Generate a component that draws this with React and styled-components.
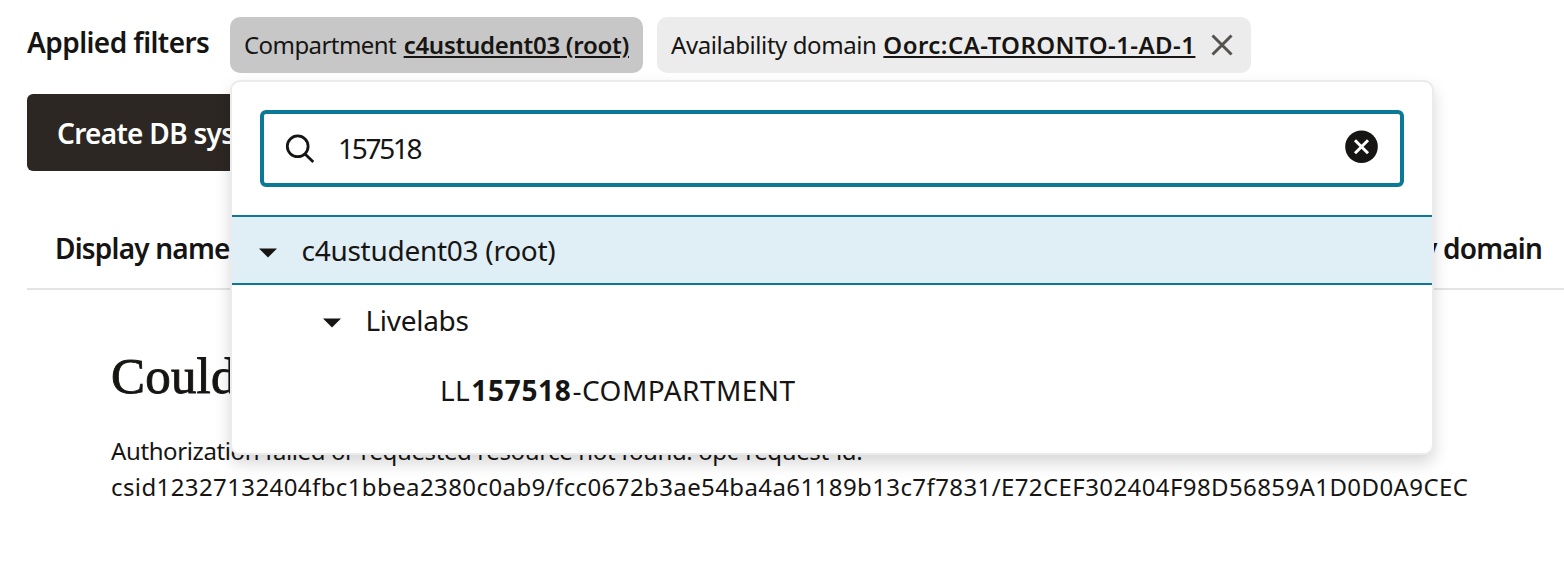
import React from "react";
import styled, { createGlobalStyle } from "styled-components";

const GlobalStyle = createGlobalStyle`
  *, *::before, *::after { box-sizing: border-box; }
  body {
    margin: 0;
    background: #fff;
    color: #161513;
    font-family: "Noto Sans", "Open Sans", sans-serif;
    overflow: hidden;
  }
`;

const Page = styled.main`
  position: relative;
  height: 584px;
  padding: 17px 0 0 27px;
  overflow: hidden;
`;

const Text = styled.span`
  letter-spacing: ${(p) => p.$spacing || 0}px;
  white-space: pre;
`;

const Match = styled.b`
  margin: 0 1px;
  font-weight: 700;
  letter-spacing: 0.7px;
`;

const FilterBar = styled.div`
  display: flex;
  height: 56px;
`;

const FilterLabel = styled.div`
  width: 203px;
  font-size: 28px;
  line-height: 50px;
  font-weight: 600;
`;

const Chip = styled.div`
  display: flex;
  align-items: center;
  width: ${(p) => p.$width}px;
  margin-right: 14px;
  padding-left: 14px;
  border-radius: 10px;
  background: ${(p) => (p.$active ? "#c7c7c7" : "#ececec")};
  font-size: 24px;
  line-height: 56px;
`;

const ChipValue = styled.a`
  margin-left: ${(p) => p.$gap}px;
  font-weight: 600;
  letter-spacing: ${(p) => p.$spacing}px;
  text-decoration: underline;
  text-decoration-thickness: 2px;
  text-underline-offset: 2px;
  white-space: pre;
`;

const ChipClose = styled.svg`
  width: 22px;
  height: 22px;
  margin-left: 16px;
  fill: none;
  stroke: #56534f;
  stroke-width: 3;
`;

const CreateButton = styled.button`
  display: block;
  width: 300px;
  height: 77px;
  margin-top: 21px;
  padding: 0 0 0 30px;
  border: 0;
  border-radius: 6px;
  background: #2c2723;
  color: #fff;
  font: 600 28px/79px "Noto Sans", sans-serif;
  text-align: left;
`;

const TableHead = styled.div`
  display: flex;
  justify-content: space-between;
  height: 84px;
  margin-top: 35px;
  padding: 0 22px 0 28px;
  border-bottom: 2px solid #e4e4e4;
  font-size: 28px;
  font-weight: 600;
  line-height: 84px;
`;

const ErrorBlock = styled.section`
  padding: 56px 0 0 84px;
`;

const ErrorTitle = styled.h2`
  margin: 0;
  font: 400 51px/60px "Liberation Serif", serif;
  letter-spacing: 0.2px;
  -webkit-text-stroke: 0.9px #161513;
`;

const ErrorText = styled.p`
  margin: 27px 0 0;
  font-size: 24px;
  line-height: 36px;
`;

const Popover = styled.div`
  position: absolute;
  left: 230px;
  top: 80px;
  width: 1204px;
  height: 375px;
  border: 2px solid #ebebeb;
  border-radius: 10px;
  background: #fff;
  box-shadow: 0 8px 16px rgba(0, 0, 0, 0.16);
`;

const SearchBox = styled.label`
  display: flex;
  align-items: center;
  height: 77px;
  margin: 28px;
  padding: 0 21px 0 20px;
  border: 4px solid #0b7896;
  border-radius: 6px;
  font-size: 28px;
`;

const SearchIcon = styled.svg`
  width: 32px;
  height: 32px;
  fill: none;
  stroke: #161513;
  stroke-width: 2.8;
`;

const SearchValue = styled.div`
  flex: 1;
  margin: -2px 0 0 22px;
`;

const ClearIcon = styled.svg`
  width: 34px;
  height: 34px;
  margin-bottom: 4px;
`;

const TreeRow = styled.div`
  display: flex;
  align-items: center;
  height: 70px;
  padding-left: ${(p) => p.$indent}px;
  border: solid ${(p) => (p.$selected ? "#0b7896" : "transparent")};
  border-width: 2px 0;
  background: ${(p) => (p.$selected ? "#e0eef5" : "transparent")};
  font-size: 28px;
  line-height: 66px;
`;

const Caret = styled.svg`
  width: 18px;
  height: 10px;
  margin: 6px 25px 0 0;
  fill: #161513;
`;

function TreeItem({ indent, selected, leaf, children }) {
  return (
    <TreeRow $indent={indent} $selected={selected}>
      {!leaf && (
        <Caret viewBox="0 0 18 10">
          <path d="M0 0.5H18L9 9.5Z" />
        </Caret>
      )}
      {children}
    </TreeRow>
  );
}

export default function App() {
  return (
    <Page>
      <GlobalStyle />
      <FilterBar>
        <FilterLabel>
          <Text $spacing={-0.57}>Applied filters</Text>
        </FilterLabel>
        <Chip $active $width={413}>
          <Text $spacing={-0.57}>Compartment</Text>
          <ChipValue $gap={7.5} $spacing={-0.28}>c4ustudent03 (root)</ChipValue>
        </Chip>
        <Chip $width={594}>
          <Text $spacing={-0.43}>Availability domain</Text>
          <ChipValue $gap={7} $spacing={0.45}>Oorc:CA-TORONTO-1-AD-1</ChipValue>
          <ChipClose viewBox="0 0 22 22">
            <path d="M1.5 1.5L20.5 20.5M20.5 1.5L1.5 20.5" />
          </ChipClose>
        </Chip>
      </FilterBar>

      <CreateButton>
        <Text $spacing={-0.7}>Create DB system</Text>
      </CreateButton>

      <TableHead>
        <Text $spacing={-0.8}>Display name</Text>
        <Text $spacing={-0.8}>Availability domain</Text>
      </TableHead>

      <ErrorBlock>
        <ErrorTitle>Couldn't load data</ErrorTitle>
        <ErrorText>
          <Text $spacing={-0.39}>Authorization failed or requested resource not found. opc-request-id:</Text>
          <br />
          <Text $spacing={0.4}>csid12327132404fbc1bbea2380c0ab9/fcc0672b3ae54ba4a61189b13c7f7831/E72CEF302404F98D56859A1D0D0A9CEC</Text>
        </ErrorText>
      </ErrorBlock>

      <Popover>
        <SearchBox>
          <SearchIcon viewBox="0 0 32 32">
            <circle cx="13.7" cy="13.3" r="10.4" />
            <path d="M20.5 20.5L29.3 29" />
          </SearchIcon>
          <SearchValue>
            <Text $spacing={-2.3}>157518</Text>
          </SearchValue>
          <ClearIcon viewBox="0 0 34 34">
            <circle cx="16.5" cy="16.7" r="16.3" fill="#161513" />
            <path d="M10 10.2L23 23.2M23 10.2L10 23.2" stroke="#fff" strokeWidth="3" />
          </ClearIcon>
        </SearchBox>
        <TreeItem indent={26.5} selected>
          <Text $spacing={-0.27}>c4ustudent03 (root)</Text>
        </TreeItem>
        <TreeItem indent={90.5}>
          <Text $spacing={-0.3}>Livelabs</Text>
        </TreeItem>
        <TreeItem indent={208} leaf>
          <Text $spacing={0.45}>
            LL<Match>157518</Match>-COMPARTMENT
          </Text>
        </TreeItem>
      </Popover>
    </Page>
  );
}
